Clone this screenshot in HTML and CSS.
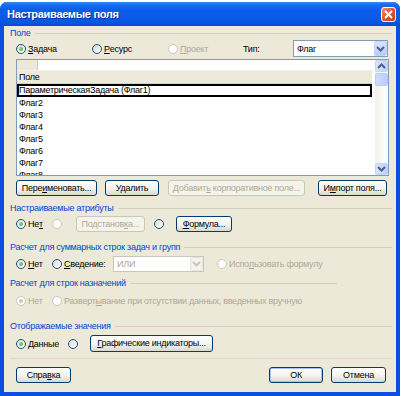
FILE: index.html
```html
<!DOCTYPE html>
<html lang="ru">
<head>
  <meta charset="UTF-8">
  <title>Настраиваемые поля</title>
  <link rel="stylesheet" href="styles.css">
</head>
<body>
  <div class="window">
    <div class="titlebar">
      <span class="title">Настраиваемые поля</span>
      <span class="close">
        <svg width="9" height="9" viewBox="0 0 9 9"><path d="M1 1 L8 8 M8 1 L1 8" stroke="#fff" stroke-width="2" fill="none"/></svg>
      </span>
    </div>

    <div class="client">
      <div class="group-label sec-field">Поле</div>
      <div class="row row-type">
        <span class="opt opt-task"><span class="radio checked"></span><u>З</u>адача</span>
        <span class="opt opt-res"><span class="radio"></span><u>Р</u>есурс</span>
        <span class="opt opt-proj disabled"><span class="radio"></span><u>П</u>роект</span>
        <span class="type-label">Тип:</span>
        <span class="select select-type">
          <span class="select-text">Флаг</span>
          <span class="select-btn"><svg width="9" height="6" viewBox="0 0 9 6"><path d="M1 1 L4.5 4.5 L8 1" stroke="#4d6185" stroke-width="2" fill="none"/></svg></span>
        </span>
      </div>

      <div class="list">
        <div class="grid">
          <div class="grid-top"><span class="corner"></span></div>
          <div class="grid-head">Поле</div>
          <div class="grid-row selected">ПараметрическаяЗадача (Флаг1)</div>
          <div class="grid-row">Флаг2</div>
          <div class="grid-row">Флаг3</div>
          <div class="grid-row">Флаг4</div>
          <div class="grid-row">Флаг5</div>
          <div class="grid-row">Флаг6</div>
          <div class="grid-row">Флаг7</div>
          <div class="grid-row">Флаг8</div>
        </div>
        <div class="scroll">
          <span class="scroll-btn"><svg width="9" height="6" viewBox="0 0 9 6"><path d="M1 5 L4.5 1.5 L8 5" stroke="#4d6185" stroke-width="2" fill="none"/></svg></span>
          <span class="scroll-thumb"></span>
          <span class="scroll-track"></span>
          <span class="scroll-btn"><svg width="9" height="6" viewBox="0 0 9 6"><path d="M1 1 L4.5 4.5 L8 1" stroke="#4d6185" stroke-width="2" fill="none"/></svg></span>
        </div>
      </div>

      <div class="row row-actions">
        <span class="btn btn-rename">Пере<u>и</u>меновать...</span>
        <span class="btn btn-delete">Удалить</span>
        <span class="btn btn-enterprise disabled">Добавит<u>ь</u> корпоративное поле...</span>
        <span class="btn btn-import">И<u>м</u>порт поля...</span>
      </div>

      <div class="group-label sec-attr">Настраиваемые атрибуты</div>
      <div class="row row-attr">
        <span class="opt opt-none"><span class="radio checked"></span>Не<u>т</u></span>
        <span class="opt opt-solo disabled"><span class="radio"></span></span>
        <span class="btn btn-lookup disabled">Подстанов<u>к</u>а...</span>
        <span class="opt opt-solo2"><span class="radio"></span></span>
        <span class="btn btn-formula"><u>Ф</u>ормула...</span>
      </div>

      <div class="group-label sec-sum">Расчет для суммарных строк задач и групп</div>
      <div class="row row-sum">
        <span class="opt opt-none"><span class="radio checked"></span><u>Н</u>ет</span>
        <span class="opt opt-rollup"><span class="radio"></span><u>С</u>ведение:</span>
        <span class="select select-rollup disabled">
          <span class="select-text">ИЛИ</span>
          <span class="select-btn"><svg width="9" height="6" viewBox="0 0 9 6"><path d="M1 1 L4.5 4.5 L8 1" stroke="#c9c7ba" stroke-width="2" fill="none"/></svg></span>
        </span>
        <span class="opt opt-useformula disabled"><span class="radio"></span>Испо<u>л</u>ьзовать формулу</span>
      </div>

      <div class="group-label short sec-assign">Расчет для строк назначений</div>
      <div class="row row-assign">
        <span class="opt opt-none disabled"><span class="radio checked"></span>Нет</span>
        <span class="opt disabled"><span class="radio"></span><span>Разверт<u>ы</u>вание при отсутствии данных, введенных вручную</span></span>
      </div>

      <div class="group-label sec-show">Отображаемые значения</div>
      <div class="row row-show">
        <span class="opt opt-data"><span class="radio checked"></span><u>Д</u>анные</span>
        <span class="opt opt-solo2"><span class="radio"></span></span>
        <span class="btn btn-graph"><u>Г</u>рафические индикаторы...</span>
      </div>

      <div class="separator"></div>

      <div class="row row-bottom">
        <span class="btn btn-help">Спра<u>в</u>ка</span>
        <span class="bottom-right">
          <span class="btn btn-ok default">ОК</span>
          <span class="btn btn-cancel">Отмена</span>
        </span>
      </div>
    </div>
  </div>
</body>
</html>
```

FILE: styles.css
```css
* {
  box-sizing: border-box;
}
body {
  margin: 0;
  background: #fff;
  font-family: 'Liberation Sans', Arial, sans-serif;
  font-size: 9px;
  letter-spacing: -0.25px;
  color: #000;
}
u {
  text-decoration: underline;
}

.window {
  width: 400px;
  height: 394px;
  margin-top: 2px;
  background: #0b4ee0;
  border-radius: 7px 7px 0 0;
  display: flex;
  flex-direction: column;
}
.titlebar {
  height: 24px;
  border-radius: 7px 7px 0 0;
  background: linear-gradient(#3d8cf6 0%, #1d6ef0 10%, #0b5ee9 30%, #0a5ae6 70%, #0753e2 90%, #0446d6 100%);
  display: flex;
  align-items: center;
  justify-content: space-between;
  padding: 0 4px 0 7px;
}
.title {
  color: #fff;
  font-weight: bold;
  font-size: 11px;
  letter-spacing: -0.3px;
  text-shadow: 1px 1px 0 #0a2f9c;
}
.close {
  width: 15px;
  height: 15px;
  border: 1px solid #fff;
  border-radius: 3px;
  background: linear-gradient(135deg, #f0936f, #e1542a 50%, #c8401a);
  display: flex;
  align-items: center;
  justify-content: center;
}

.client {
  flex: 1;
  margin: 0 4px 4px;
  background: #ece9d8;
  padding: 1px 4px 0 6px;
  display: flex;
  flex-direction: column;
}

.group-label {
  height: 12px;
  line-height: 12px;
  color: #0046d5;
  display: flex;
  align-items: center;
}
.group-label::after {
  content: '';
  flex: 1;
  height: 1px;
  margin-left: 4px;
  background: #d0d0bf;
}
.group-label.short::after {
  flex: none;
  width: 207px;
}
.sec-attr { margin-top: 6px; }
.sec-sum { margin-top: 9px; }
.sec-assign { margin-top: 5px; }
.sec-show { margin-top: 12px; }

.row {
  display: flex;
  align-items: center;
  margin-left: 6px;
  height: 16px;
}
.row-type { margin-top: 1px; height: 17px; }
.row-actions { margin-top: 4px; }
.row-attr { margin-top: 2px; }
.row-sum { margin-top: 3px; }
.row-assign { margin-top: 5px; height: 14px; }
.row-show { margin-top: 3px; height: 17px; }
.row-bottom { margin-top: 8px; justify-content: space-between; margin-right: 6px; }

.opt {
  display: flex;
  align-items: center;
  white-space: nowrap;
}
.opt .radio {
  margin-right: 2px;
}
.opt-task, .opt-res { width: 76px; }
.opt-proj { width: 75px; }
.opt-none { width: 36px; }
.opt-solo { width: 24px; }
.opt-solo2 { width: 22px; margin-left: 9px; }
.opt-rollup { width: 61px; }
.opt-useformula { margin-left: 13px; }
.opt-data { width: 52px; }
.row-show .opt-solo2 { margin-left: 0; }

.radio {
  width: 10px;
  height: 10px;
  flex: none;
  border-radius: 50%;
  border: 1px solid #1c5180;
  background: linear-gradient(135deg, #dcd9cf, #fff);
  position: relative;
}
.radio.checked::after {
  content: '';
  position: absolute;
  left: 2px;
  top: 2px;
  width: 4px;
  height: 4px;
  border-radius: 50%;
  background: radial-gradient(circle at 35% 35%, #8fe08f, #21a121);
}
.disabled {
  color: #aca899;
}
.disabled .radio {
  border-color: #cac8bb;
  background: #fff;
}
.disabled .radio.checked::after {
  background: #cac8bb;
}

.type-label {
  width: 50px;
}
.select {
  height: 16px;
  border: 1px solid #7f9db9;
  background: #fff;
  display: flex;
  align-items: center;
  justify-content: space-between;
  padding-left: 3px;
}
.select-type { width: 95px; height: 17px; }
.select-rollup { width: 91px; border-color: #c9c7ba; }
.select-btn {
  width: 13px;
  height: 100%;
  border: 1px solid #c3d3fd;
  border-radius: 2px;
  background: linear-gradient(#d9e5fe, #b7cbfa);
  display: flex;
  align-items: center;
  justify-content: center;
}
.select.disabled .select-btn {
  background: #f4f3ee;
  border-color: #e8e6dc;
}

.list {
  margin-top: 2px;
  margin-left: 6px;
  width: 373px;
  height: 117px;
  border: 1px solid #7f9db9;
  background: #fff;
  display: flex;
  overflow: hidden;
}
.grid {
  flex: 1;
  overflow: hidden;
}
.grid-top {
  height: 11px;
  border-bottom: 1px solid #f0efe8;
}
.corner {
  display: block;
  width: 21px;
  height: 100%;
  background: #ece9d8;
  border-right: 1px solid #cfccbd;
}
.grid-head {
  width: 355px;
  height: 13px;
  line-height: 13px;
  padding-left: 2px;
  background: #ebeadb;
  border-bottom: 1px solid #d6d2c2;
}
.grid-row {
  height: 12px;
  line-height: 12px;
  padding-left: 2px;
  white-space: nowrap;
}
.grid-row.selected {
  width: 355px;
  height: 13px;
  line-height: 9px;
  border: 2px solid #000;
  padding-left: 0;
}
.scroll {
  width: 13px;
  display: flex;
  flex-direction: column;
  background: linear-gradient(90deg, #f3f1ec, #fefefe);
}
.scroll-btn {
  height: 12px;
  border: 1px solid #c3d3fd;
  border-radius: 2px;
  background: linear-gradient(90deg, #d9e5fe, #bcd0fb);
  display: flex;
  align-items: center;
  justify-content: center;
}
.scroll-thumb {
  height: 13px;
  margin-top: 1px;
  border: 1px solid #b8cdfa;
  border-radius: 2px;
  background: linear-gradient(90deg, #cfdcfd, #bccffb);
}
.scroll-track {
  flex: 1;
}

.btn {
  display: block;
  height: 16px;
  line-height: 14px;
  text-align: center;
  border: 1px solid #003c74;
  border-radius: 3px;
  background: linear-gradient(#fff, #f4f3ee 55%, #dcd8cd);
  white-space: nowrap;
}
.btn.disabled {
  border-color: #c9c7ba;
  background: #f5f4ea;
}
.btn.default {
  box-shadow: inset 0 0 0 1px #a9c2f5;
}
.btn-rename { width: 81px; }
.btn-delete { width: 54px; margin-left: 8px; }
.btn-enterprise { width: 137px; margin-left: 9px; }
.btn-import { width: 69px; margin-left: 13px; }
.btn-lookup { width: 69px; }
.btn-formula { width: 56px; }
.btn-graph { width: 123px; height: 17px; line-height: 15px; }
.btn-help { width: 55px; }
.btn-ok { width: 54px; }
.btn-cancel { width: 55px; margin-left: 8px; }
.bottom-right {
  display: flex;
}

.separator {
  margin-top: 6px;
  height: 1px;
  background: #dcd9c9;
}
```
